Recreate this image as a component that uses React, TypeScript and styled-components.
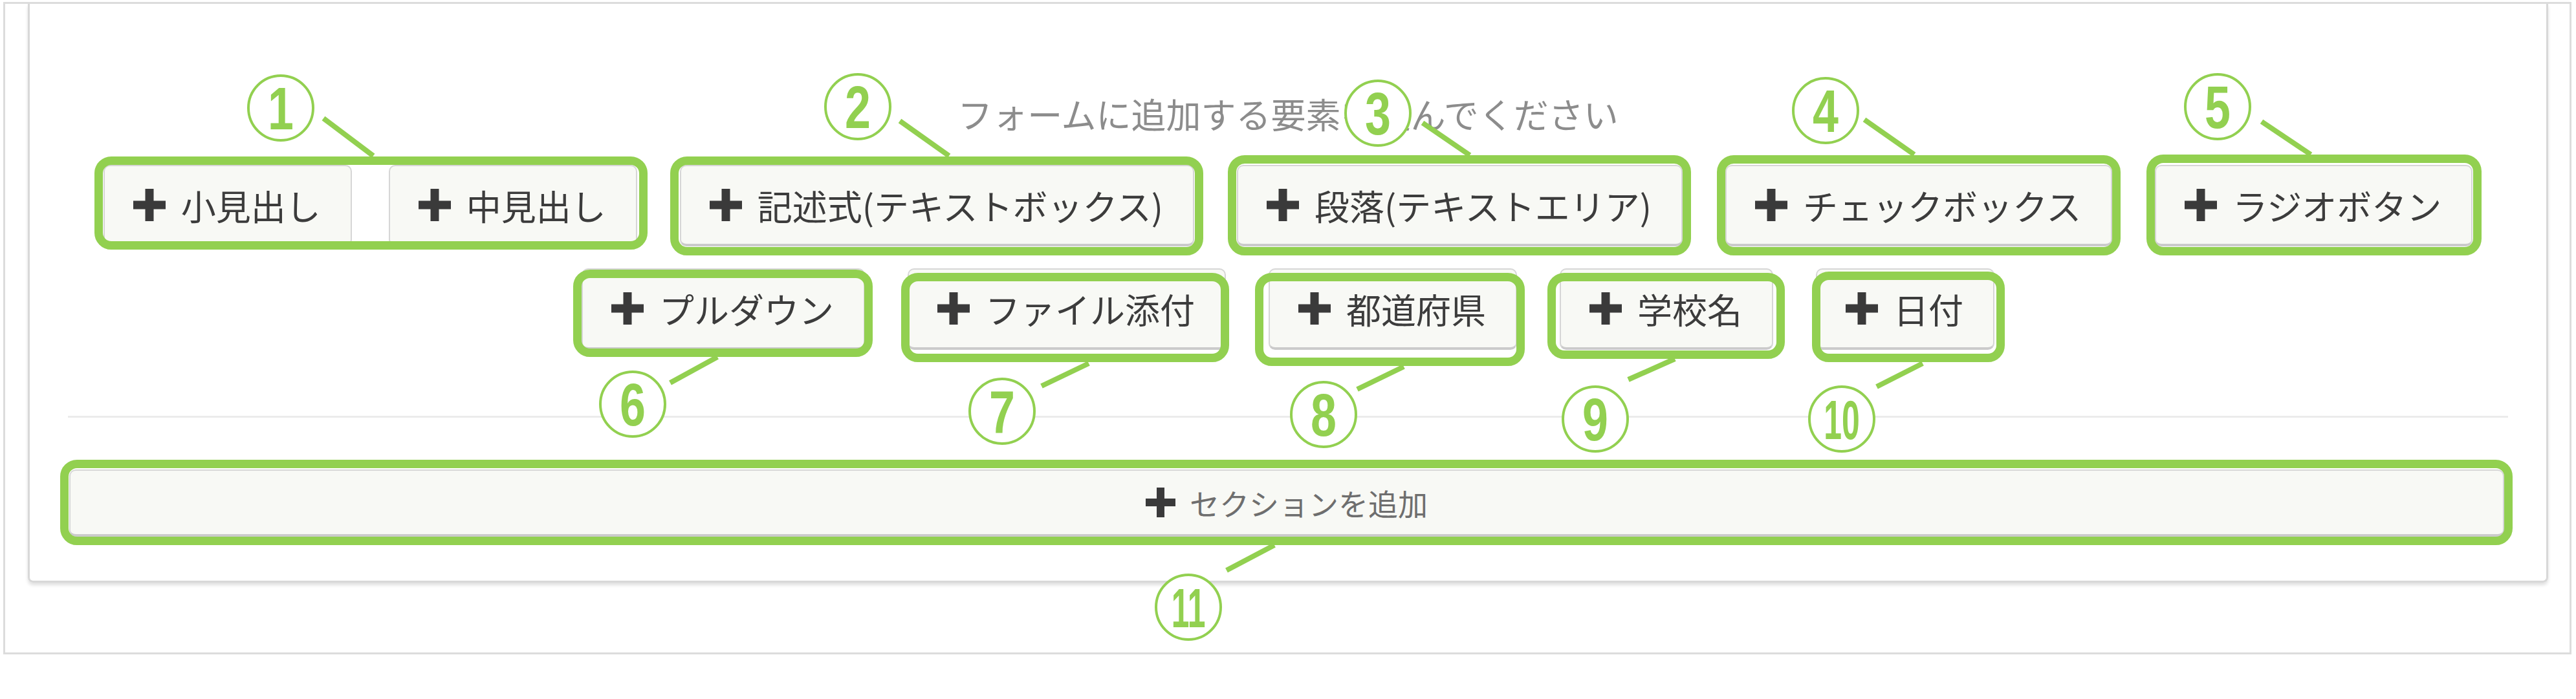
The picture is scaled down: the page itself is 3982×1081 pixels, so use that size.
import React from "react";
import styled, { createGlobalStyle } from "styled-components";

const GREEN = "#92d050";

const GlobalStyle = createGlobalStyle`
  html, body {
    margin: 0;
    background: #fff;
  }
  body {
    font-family: "Noto Sans CJK JP", "Noto Sans", sans-serif;
  }
`;

const Frame = styled.div`
  box-sizing: border-box;
  width: 3970px;
  height: 1009px;
  margin: 3px 0 0 5px;
  border: 3px solid #dcdcdc;
  padding: 0 33px 0 35px;
`;

const Panel = styled.section`
  box-sizing: border-box;
  border: 3px solid #d8d8d8;
  border-top: none;
  border-radius: 0 0 8px 8px;
  box-shadow: 0 4px 5px rgba(0, 0, 0, 0.12);
  padding: 135px 59px 68px;
  display: flex;
  flex-direction: column;
`;

const Heading = styled.p`
  margin: 0 0 44px;
  font-size: 54px;
  line-height: 70px;
  color: #8c8c8c;
  text-align: center;
`;

const Palette = styled.div`
  display: flex;
  flex-wrap: wrap;
  justify-content: center;
  align-items: flex-start;
  column-gap: 66px;
  row-gap: 34px;
`;

const Group = styled.div`
  display: flex;
  gap: 57px;
`;

const AddButton = styled.button<{ $wide?: boolean }>`
  box-sizing: border-box;
  display: inline-flex;
  align-items: center;
  justify-content: center;
  gap: ${(p) => (p.$wide ? "22px" : "24px")};
  width: ${(p) => (p.$wide ? "100%" : "auto")};
  height: ${(p) => (p.$wide ? "104px" : "126px")};
  padding: ${(p) => (p.$wide ? "0" : "0 46px 0 44px")};
  font-family: inherit;
  font-size: ${(p) => (p.$wide ? "46px" : "54px")};
  color: ${(p) => (p.$wide ? "#6e6e6e" : "#3c3c3c")};
  background: #f8f9f5;
  border: 2px solid #d6d6d6;
  border-bottom: 4px solid #cbcbcb;
  border-radius: 10px;
  white-space: nowrap;
  cursor: pointer;
`;

const Divider = styled.hr`
  margin: 102px 0 80px;
  border: none;
  border-top: 3px solid #ebebeb;
`;

const CalloutBox = styled.div<{ $block?: boolean }>`
  position: relative;
  display: flex;
  width: ${(p) => (p.$block ? "calc(100% - 8px)" : "auto")};
  margin-left: ${(p) => (p.$block ? "2px" : "0")};
`;

const Outline = styled.span<{ $f: number[] }>`
  position: absolute;
  top: ${(p) => -p.$f[0]}px;
  right: ${(p) => -p.$f[1]}px;
  bottom: ${(p) => -p.$f[2]}px;
  left: ${(p) => -p.$f[3]}px;
  border: 13px solid ${GREEN};
  border-radius: 26px;
  pointer-events: none;
  z-index: 2;
`;

const Marker = styled.svg<{ $x: number; $y: number; $below: boolean }>`
  position: absolute;
  left: ${(p) => p.$x}px;
  top: ${(p) => (p.$below ? `calc(100% + ${p.$y}px)` : `${p.$y}px`)};
  width: 1px;
  height: 1px;
  overflow: visible;
  pointer-events: none;
  z-index: 3;
`;

const Plus = ({ size }: { size: number }) => (
  <svg width={size} height={size} viewBox="0 0 50 50" fill="#3a3a3a">
    <path d="M18.5 0h13v18.5H50v13H31.5V50h-13V31.5H0v-13h18.5z" />
  </svg>
);

type CalloutProps = {
  n: string;
  frame: number[]; // outward reach of the green outline: top, right, bottom, left
  below?: boolean;
  badge: [number, number];
  leader: [number, number, number, number];
  block?: boolean;
  children: React.ReactNode;
};

// green outline around a control, plus a numbered badge tied to it by a short leader
const Callout = ({ n, frame, below = false, badge, leader, block, children }: CalloutProps) => {
  const twoDigits = n.length > 1;
  return (
    <CalloutBox $block={block}>
      {children}
      <Outline $f={frame} />
      <Marker $x={-frame[3]} $y={below ? frame[2] : -frame[0]} $below={below}>
        <line
          x1={leader[0]}
          y1={leader[1]}
          x2={leader[2]}
          y2={leader[3]}
          stroke={GREEN}
          strokeWidth={8}
        />
        <circle cx={badge[0]} cy={badge[1]} r={50} fill="#fff" stroke={GREEN} strokeWidth={4} />
        <text
          transform={`translate(${badge[0]} ${badge[1]}) scale(${twoDigits ? 0.58 : 0.78} 1)`}
          x={0}
          y={twoDigits ? 31 : 33}
          textAnchor="middle"
          fontFamily="'Liberation Sans', Arial, sans-serif"
          fontWeight={700}
          fontSize={twoDigits ? 86 : 92}
          fill={GREEN}
        >
          {n}
        </text>
      </Marker>
    </CalloutBox>
  );
};

const Add = ({ label, wide }: { label: string; wide?: boolean }) => (
  <AddButton $wide={wide}>
    <Plus size={wide ? 46 : 50} />
    <span>{label}</span>
  </AddButton>
);

export default function App() {
  return (
    <>
      <GlobalStyle />
      <Frame>
        <Panel>
          <Heading>フォームに追加する要素を選んでください</Heading>
          <Palette>
            <Callout n="1" frame={[13, 16, 5, 14]} badge={[288, -75]} leader={[354, -59, 431, -1]}>
              <Group>
                <Add label="小見出し" />
                <Add label="中見出し" />
              </Group>
            </Callout>
            <Callout n="2" frame={[13, 14, 14, 15]} badge={[290, -77]} leader={[355, -55, 431, -1]}>
              <Add label="記述式(テキストボックス)" />
            </Callout>
            <Callout n="3" frame={[15, 13, 14, 14]} badge={[232, -65]} leader={[301, -50, 374, 0]}>
              <Add label="段落(テキストエリア)" />
            </Callout>
            <Callout n="4" frame={[15, 13, 14, 13]} badge={[168, -69]} leader={[228, -55, 305, -1]}>
              <Add label="チェックボックス" />
            </Callout>
            <Callout n="5" frame={[16, 14, 14, 13]} badge={[110, -74]} leader={[178, -51, 254, 0]}>
              <Add label="ラジオボタン" />
            </Callout>
            <Callout n="6" below frame={[-2, 12, 11, 13]} badge={[92, 73]} leader={[223, 0, 150, 40]}>
              <Add label="プルダウン" />
            </Callout>
            <Callout n="7" below frame={[-7, 5, 19, 10]} badge={[156, 76]} leader={[290, 2, 217, 37]}>
              <Add label="ファイル添付" />
            </Callout>
            <Callout n="8" below frame={[-7, 12, 25, 21]} badge={[106, 75]} leader={[230, 1, 158, 36]}>
              <Add label="都道府県" />
            </Callout>
            <Callout n="9" below frame={[-7, 18, 14, 19]} badge={[74, 93]} leader={[197, 0, 125, 32]}>
              <Add label="学校名" />
            </Callout>
            <Callout n="10" below frame={[-5, 16, 19, 6]} badge={[46, 88]} leader={[171, 2, 100, 38]}>
              <Add label="日付" />
            </Callout>
          </Palette>
          <Divider />
          <Callout
            n="11"
            block
            below
            frame={[15, 13, 13, 14]}
            badge={[1744, 96]}
            leader={[1877, 0, 1803, 39]}
          >
            <Add wide label="セクションを追加" />
          </Callout>
        </Panel>
      </Frame>
    </>
  );
}
